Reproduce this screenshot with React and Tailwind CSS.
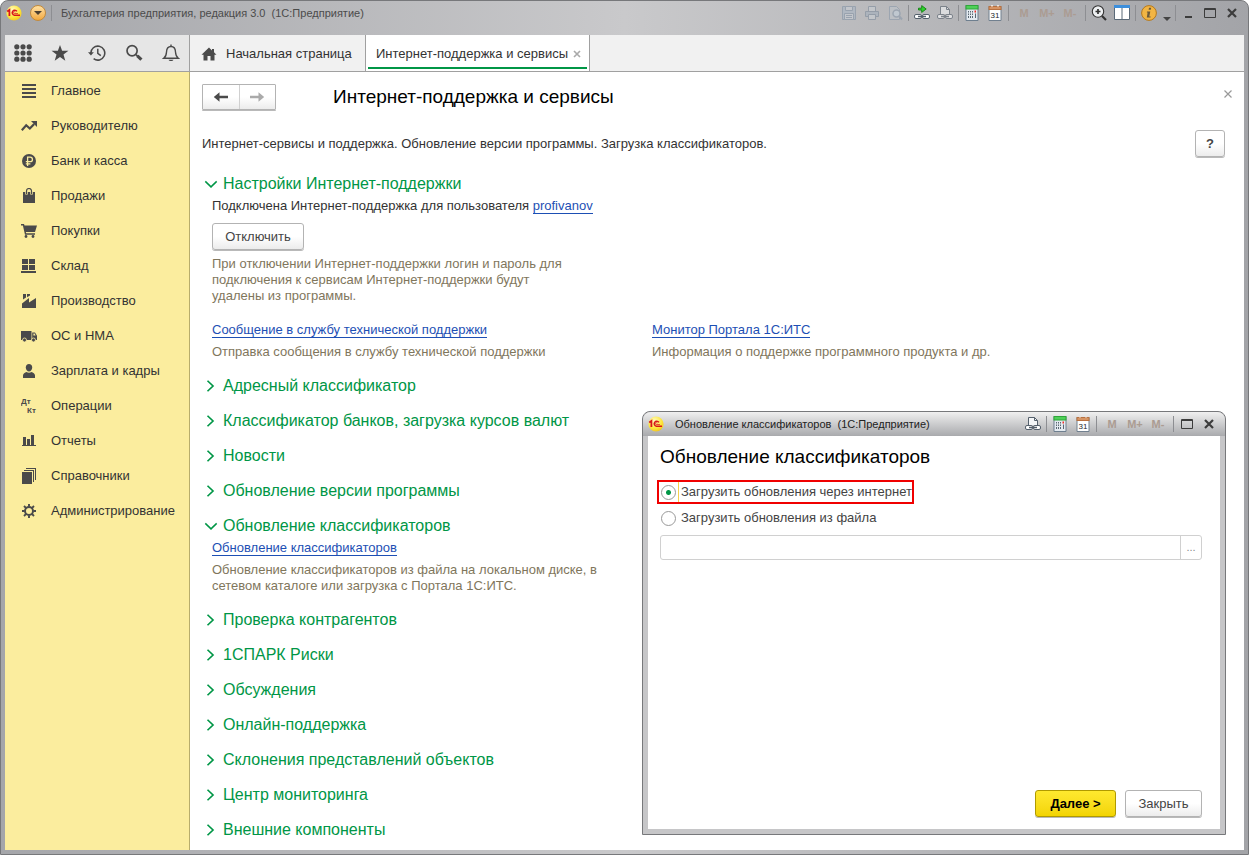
import { useState } from 'react';
import { clsx } from 'clsx';

/* ---------- icons ---------- */

const Svg = ({ size = 16, children, ...rest }) => (
  <svg width={size} height={size} viewBox="0 0 16 16" fill="currentColor" aria-hidden="true" className="shrink-0" {...rest}>
    {children}
  </svg>
);

const Logo = () => (
  <svg width="16" height="16" viewBox="0 0 16 16" className="shrink-0" aria-label="1С">
    <defs>
      <radialGradient id="logoFill" cx="0.4" cy="0.3" r="0.8">
        <stop offset="0" stopColor="#fffbc0" />
        <stop offset="0.6" stopColor="#fde63a" />
        <stop offset="1" stopColor="#eeb91c" />
      </radialGradient>
    </defs>
    <circle cx="8" cy="8" r="7.6" fill="url(#logoFill)" />
    <path d="M1.2 6.4 3.400 5v6" fill="none" stroke="#d8161b" strokeWidth="1.800" />
    <path d="M10.900 6.400A2.500 2.500 0 1 0 8.400 10.200H14" fill="none" stroke="#d8161b" strokeWidth="1.600" />
    <path d="M9.300 7.300a.9.9 0 1 0-.8 1.200H12" fill="none" stroke="#d8161b" strokeWidth="0.700" />
  </svg>
);

const SaveIcon = () => (
  <Svg fill="none" stroke="#8393a5">
    <path d="M1.5 1.5h13v13h-13z" fill="#a9b6c4" />
    <path d="M4.5 1.5h7v4h-7zM3.5 8.5h9v6h-9z" fill="#c9ced4" />
    <path d="M5 10.5h6M5 12.500h6" />
  </Svg>
);

const PrintIcon = () => (
  <Svg fill="none" stroke="#7d8b9b">
    <path d="M4.500 6V1.500h7V6" fill="#c9ced4" />
    <path d="M1.500 6.500h13v5h-13z" fill="#a3afbc" />
    <path d="M4.500 9.500h7v5h-7z" fill="#c9ced4" />
  </Svg>
);

const PreviewIcon = () => (
  <Svg fill="none" stroke="#8a99aa">
    <path d="M2.500 1.500h7l3 3v10h-10z" fill="#bfc5cc" />
    <circle cx="9.500" cy="8.500" r="3.500" fill="#c5d2de" strokeWidth="1.500" />
    <path d="m12 11 3 3.500" strokeWidth="2" />
  </Svg>
);

const LinkIcon = ({ arrow, page }) => (
  <Svg fill="none" stroke="#55606c">
    {page && <path d="M3.500 9V1.500h6l3 3V9" fill="#f4f6f8" />}
    {page && <path d="M9.500 1.500v3h3" />}
    <rect x="0.500" y="9.500" width="7" height="4" rx="1.500" fill="#fff" />
    <rect x="8.500" y="9.500" width="7" height="4" rx="1.500" fill="#fff" />
    <path d="M4 11.500h8" strokeWidth="1.500" />
    {arrow && <path d="M4.500 3.200h3.200V.6L12.200 4 7.700 7.400V5H4.500z" fill="#2fd32f" stroke="#128012" strokeWidth="0.900" />}
  </Svg>
);

const CalcIcon = () => (
  <Svg>
    <path d="M2 .5h12v15H2z" fill="#e4eaf0" stroke="#6e7f8f" />
    <path d="M1.500 0h13v4.500h-13z" fill="#2fa53a" />
    <path d="M2.500 1h11v2.500h-11z" fill="#4fd058" />
    <path d="M4 6h1v1.500H4zM6 6h1v1.500H6zM8 6h1v1.500H8zM4 8.500h1V10H4zM6 8.500h1V10H6zM8 8.500h1V10H8zM4 11h1v2H4zM6 11h1v2H6zM8 11h1v2H8zM11 8.500h1V13h-1z" fill="#5b6873" />
    <path d="M10.500 5.500H12v2h-1.500z" fill="#f0302a" />
  </Svg>
);

const CalendarIcon = () => (
  <Svg>
    <path d="M2 1.500h12v14H2z" fill="#fff" stroke="#71808f" />
    <path d="M1.500 1h13v4h-13z" fill="#b8703f" />
    <path d="M2.500 2h11v2h-11z" fill="#d69464" />
    <path d="M4 0h2v1.500H4zM10 0h2v1.500h-2z" fill="#ece4de" />
    <text x="8" y="12.500" textAnchor="middle" fontSize="8" fill="#22282e" fontFamily="Liberation Sans, sans-serif">31</text>
  </Svg>
);

const ZoomIcon = () => (
  <Svg fill="none" stroke="#333">
    <circle cx="7" cy="6.500" r="5.700" fill="#eef0f2" strokeWidth="1.100" />
    <path d="M4.500 6.500h5M7 4v5" strokeWidth="1.700" />
    <path d="m11 11 4 4" strokeWidth="2.200" />
  </Svg>
);

const ColumnsIcon = () => (
  <Svg>
    <path d="M.5 1.500h15v13H.5z" fill="#fff" stroke="#5b6a78" />
    <path d="M0 0h16v3H0z" fill="#3d8fdc" />
    <path d="M7.500 3h1v12h-1z" fill="#5b6a78" />
  </Svg>
);

const InfoIcon = () => (
  <Svg>
    <circle cx="8" cy="8" r="7.400" fill="#f2b544" stroke="#b4781c" />
    <path d="M8 2.700h2.200l-.4 2H7.600zM6 6.400h3.300l-1 5h1.400l-.2 1.200H5.800L6.600 7.600H5.800z" fill="#6b5a3c" />
  </Svg>
);

const MinimizeIcon = () => (
  <Svg><path d="M5 11h7v2H5z" /></Svg>
);

const MaximizeIcon = () => (
  <Svg fill="none" stroke="currentColor">
    <path d="M3 4h10" strokeWidth="2" />
    <path d="M2.500 3.500h11v9h-11z" />
  </Svg>
);

const CloseIcon = ({ size }) => (
  <Svg size={size} fill="none" stroke="currentColor">
    <path d="m4 4 8 8M12 4l-8 8" strokeWidth="2.200" />
  </Svg>
);

const ThinCloseIcon = () => (
  <Svg fill="none" stroke="currentColor"><path d="m4.500 4.500 7 7M11.500 4.500l-7 7" strokeWidth="1.200" /></Svg>
);

const AppsIcon = () => (
  <Svg size={18}>
    {[2.5, 8, 13.5].map((y) => [2.5, 8, 13.5].map((x) => <circle key={`${x}-${y}`} cx={x} cy={y} r="2.300" />))}
  </Svg>
);

const StarIcon = () => (
  <Svg size={18}><path d="m8 .8 1.900 5.200h5.600L11.100 9.300l1.600 5.500L8 11.500l-4.700 3.300 1.600-5.500L.5 6h5.600z" /></Svg>
);

const HistoryIcon = () => (
  <Svg size={18} fill="none" stroke="currentColor">
    <path d="M2.500 8.200A6.200 6.200 0 1 1 5 13.100" strokeWidth="1.400" />
    <path d="M0 7.300h5.200L2.600 10.300z" fill="currentColor" stroke="none" />
    <path d="M8.700 4.300v4l2.700 2" strokeWidth="1.300" />
  </Svg>
);

const SearchIcon = () => (
  <Svg size={18} fill="none" stroke="currentColor">
    <circle cx="6.300" cy="6" r="4.500" strokeWidth="1.500" />
    <path d="m9.800 9.500 1.500 1.500" strokeWidth="1.500" />
    <path d="m11 10.500 3.600 3.400" strokeWidth="2.800" />
  </Svg>
);

const BellIcon = () => (
  <Svg size={18} fill="none" stroke="currentColor">
    <path d="M1.500 12.700c2-1.500 2.400-3 2.500-5.500.1-3 1.500-5 4-5s3.900 2 4 5c.1 2.500.5 4 2.500 5.500z" strokeWidth="1.200" />
    <path d="M7.400.5h1.200v2H7.400zM5.800 14h4.400c-.4 1.600-4 1.600-4.400 0z" fill="currentColor" stroke="none" />
  </Svg>
);

const HomeIcon = () => (
  <Svg><path d="M8 1.500.5 8.700h2V14.500h4V10h3v4.500h4V8.700h2L13 6.300V3h-2v1.400z" /></Svg>
);

const ArrowIcon = ({ flip }) => (
  <Svg className={clsx('shrink-0', flip && 'rotate-180')}>
    <path d="M.8 8l5.700-4.800v3.600H15v2.400H6.500v3.600z" />
  </Svg>
);

const ChevronIcon = ({ open }) => (
  <Svg size={14} fill="none" stroke="currentColor">
    {open ? <path d="m1.500 5 6.500 6.300L14.500 5" strokeWidth="1.700" /> : <path d="m4 2 6.300 6L4 14" strokeWidth="1.900" />}
  </Svg>
);

const menuIcons = {
  main: <path d="M1 1h14v2H1zM1 5h14v2H1zM1 9h14v2H1zM1 13h14v2H1z" />,
  trend: (
    <>
      <path d="m.8 12.300 4.400-5 3.600 3.200 4.400-4.600" fill="none" stroke="currentColor" strokeWidth="2.200" />
      <path d="M10 3h6v6z" />
    </>
  ),
  ruble: (
    <>
      <circle cx="8" cy="8" r="7" />
      <path d="M6.600 13V4.200h2.600a2.200 2.200 0 0 1 0 4.500H4.800M4.800 10.800h4.600" fill="none" stroke="#fbed9e" strokeWidth="1.300" />
    </>
  ),
  bag: (
    <>
      <path d="M2 4h12v11H2z" />
      <path d="M5.500 6.500V3a2.500 2.500 0 0 1 5 0v3.500" fill="none" stroke="#fbed9e" strokeWidth="2.600" />
      <path d="M5.500 6V3a2.500 2.500 0 0 1 5 0v3" fill="none" stroke="currentColor" strokeWidth="1.200" />
    </>
  ),
  cart: (
    <>
      <path d="M0 1h3l.5 1.500H16L14 9H4.800l.4 1.300H14v1.400H4L1.900 2.400H0z" />
      <circle cx="5" cy="13.500" r="1.400" />
      <circle cx="12" cy="13.500" r="1.400" />
    </>
  ),
  stock: <path d="M1 1h6v5H1zM8 1h6v5H8zM1 7h6v5H1zM8 7h6v5H8zM0 13h15v2H0z" />,
  factory: <path d="M2 1h3v3.500L2 6.500zM6 1h3v1.500L6 4.200zM1 15v-4.500L8 5v4.500L15 5v10z" />,
  truck: (
    <>
      <path d="M0 3h10.500v9H0zM11.200 4.500H14l2 3.300V12h-4.800z" />
      <path d="M12.400 5.600h1.200l1 2h-2.200z" fill="#fbed9e" />
      <circle cx="3.500" cy="12" r="2" stroke="#fbed9e" strokeWidth="0.800" />
      <circle cx="12.500" cy="12" r="2" stroke="#fbed9e" strokeWidth="0.800" />
    </>
  ),
  person: (
    <>
      <path d="M8 1c2 0 3.200 1.300 3.200 3.400S9.800 8.500 8 8.500 4.800 6.500 4.800 4.400 6 1 8 1z" />
      <path d="M2 15v-2.500C2 10.500 4 9.500 5.500 9c1.500 1 3.500 1 5 0 1.500.5 3.500 1.500 3.500 3.500V15z" />
    </>
  ),
  debit: (
    <g fontFamily="Liberation Sans, sans-serif" fontSize="8" fontWeight="bold">
      <text x="0" y="6">Дт</text>
      <text x="6" y="15">Кт</text>
    </g>
  ),
  chart: <path d="M2 4h3v8H2zM6 6h3v6H6zM10 2h3v10h-3zM1 12h14v1H1z" />,
  books: <path d="M1 4h10v12H1zM3 2h10v12h-1V3H3zM5 0h10v12h-1V1H5z" />,
  gear: (
    <>
      <circle cx="8" cy="8" r="4" fill="none" stroke="currentColor" strokeWidth="2" />
      <path d="M8 1v2.500M8 12.500V15M1 8h2.500M12.500 8H15M3 3l1.900 1.900M11.100 11.100 13 13M13 3l-1.900 1.900M4.900 11.100 3 13" stroke="currentColor" strokeWidth="1.900" />
    </>
  ),
};

/* ---------- data ---------- */

const menu = [
  { icon: 'main', label: 'Главное' },
  { icon: 'trend', label: 'Руководителю' },
  { icon: 'ruble', label: 'Банк и касса' },
  { icon: 'bag', label: 'Продажи' },
  { icon: 'cart', label: 'Покупки' },
  { icon: 'stock', label: 'Склад' },
  { icon: 'factory', label: 'Производство' },
  { icon: 'truck', label: 'ОС и НМА' },
  { icon: 'person', label: 'Зарплата и кадры' },
  { icon: 'debit', label: 'Операции' },
  { icon: 'chart', label: 'Отчеты' },
  { icon: 'books', label: 'Справочники' },
  { icon: 'gear', label: 'Администрирование' },
];

const tools = [
  { label: 'Меню функций', Icon: AppsIcon },
  { label: 'Избранное', Icon: StarIcon },
  { label: 'История', Icon: HistoryIcon },
  { label: 'Поиск', Icon: SearchIcon },
  { label: 'Оповещения', Icon: BellIcon },
];

/* ---------- small parts ---------- */

const BarButton = ({ label, disabled, children }) => (
  <button type="button" aria-label={label} disabled={disabled} className={clsx('flex h-4 w-4 items-center justify-center', disabled && 'opacity-60')}>
    {children}
  </button>
);

const MemoryButton = ({ children }) => (
  <button type="button" className="flex h-4 w-4 items-center justify-center text-[11px] font-bold text-[#ab9c92]">{children}</button>
);

const MemoryButtons = () => (
  <div className="flex items-center gap-[7px] px-[2px]">
    <MemoryButton>M</MemoryButton>
    <MemoryButton>M+</MemoryButton>
    <MemoryButton>M-</MemoryButton>
  </div>
);

const Separator = ({ tight }) => <span className={clsx('h-4 w-px bg-[#8d8e92]', tight ? 'mx-1' : 'mx-[5px]')} />;

const Group = ({ children }) => <div className="flex items-center gap-[7px]">{children}</div>;

const Button = ({ primary, className, children, ...rest }) => (
  <button
    type="button"
    className={clsx(
      'h-[27px] rounded-[3px] border text-[13px] shadow-[0_1px_0_#b9b9b9]',
      primary
        ? 'border-[#b09a00] bg-linear-to-b from-[#ffe92e] to-[#f3d400] font-bold text-black'
        : 'border-[#b3b3b3] bg-linear-to-b from-white from-50% to-[#ececec] text-[#444]',
      className
    )}
    {...rest}
  >
    {children}
  </button>
);

const Link = ({ children }) => (
  <a href="#" className="border-b border-[#1d4fb4] leading-[14px] text-[#1d4fb4]">{children}</a>
);

const Hint = ({ children }) => <p className="mt-[6px] leading-4 text-[#7f765c]">{children}</p>;

const Section = ({ title, defaultOpen = false, children }) => {
  const [open, setOpen] = useState(defaultOpen);

  return (
    <section>
      <h2>
        <button
          type="button"
          aria-expanded={open}
          onClick={() => setOpen(!open)}
          className="flex h-5 items-center gap-[5px] text-[16px] leading-5 text-[#009646]"
        >
          <ChevronIcon open={open} />
          {title}
        </button>
      </h2>
      {open && children && <div className="mt-1 pb-px pl-2">{children}</div>}
    </section>
  );
};

/* ---------- page ---------- */

const TitleBar = () => (
  <header className="flex h-[34px] items-start justify-between pt-[3px] pr-2 pl-[5px] text-[#3c3c3c]">
    <div className="flex h-[18px] items-center">
      <Logo />
      <button type="button" aria-label="Главное меню" className="ml-2 flex h-4 w-4 items-center justify-center rounded-full border border-[#c48a3a] bg-linear-to-b from-[#ffe0a0] to-[#f2a93c]">
        <svg width="8" height="4" viewBox="0 0 8 4" aria-hidden="true"><path d="M0 0h8L4 4z" fill="#4d4030" /></svg>
      </button>
      <Separator />
      <span className="ml-1 text-[11px] whitespace-pre text-[#4b4b4b]">Бухгалтерия предприятия, редакция 3.0  (1С:Предприятие)</span>
    </div>
    <div className="flex h-[18px] items-center">
      <Group>
        <BarButton label="Сохранить" disabled><SaveIcon /></BarButton>
        <BarButton label="Печать" disabled><PrintIcon /></BarButton>
        <BarButton label="Просмотр" disabled><PreviewIcon /></BarButton>
      </Group>
      <Separator />
      <Group>
        <BarButton label="Перейти по ссылке"><LinkIcon arrow /></BarButton>
        <BarButton label="Получить ссылку" disabled><LinkIcon page /></BarButton>
      </Group>
      <Separator />
      <Group>
        <BarButton label="Калькулятор"><CalcIcon /></BarButton>
        <BarButton label="Календарь"><CalendarIcon /></BarButton>
      </Group>
      <Separator />
      <MemoryButtons />
      <Separator />
      <Group>
        <BarButton label="Масштаб"><ZoomIcon /></BarButton>
        <BarButton label="Панели"><ColumnsIcon /></BarButton>
      </Group>
      <Separator />
      <div className="flex items-center gap-[6px]">
        <BarButton label="Справка"><InfoIcon /></BarButton>
        <button type="button" aria-label="Ещё" className="flex h-4 w-2 items-end">
          <svg width="8" height="4" viewBox="0 0 8 4" aria-hidden="true"><path d="M0 0h8L4 4z" fill="#444" /></svg>
        </button>
      </div>
      <Separator tight />
      <div className="flex items-center gap-[6px]">
        <BarButton label="Свернуть"><MinimizeIcon /></BarButton>
        <BarButton label="Развернуть"><MaximizeIcon /></BarButton>
        <BarButton label="Закрыть окно"><CloseIcon /></BarButton>
      </div>
    </div>
  </header>
);

const Tabs = () => (
  <div className="flex h-[37px] border-b border-[#a0a0a0] bg-[#f1f1f1] text-[13px] text-[#333]">
    <div className="flex w-[185px] shrink-0 items-center border-r border-[#a0a0a0] bg-[#e6e6e6] text-[#4a4a4a]">
      {tools.map(({ label, Icon }) => (
        <button key={label} type="button" aria-label={label} className="flex flex-1 justify-center">
          <Icon />
        </button>
      ))}
    </div>
    <button type="button" className="flex w-44 items-center gap-[9px] border-r border-[#a0a0a0] pt-px pl-[11px]">
      <span className="text-[#4a4a4a]"><HomeIcon /></span>
      Начальная страница
    </button>
    <div className="flex w-56 border-r border-[#a0a0a0] bg-white px-[2px] pb-[2px]">
      <div className="flex flex-1 items-center justify-between border-b-2 border-[#009646] pt-[5px] pr-1 pl-2">
        <button type="button">Интернет-поддержка и сервисы</button>
        <button type="button" aria-label="Закрыть вкладку" className="text-[#aaa]"><CloseIcon size={12} /></button>
      </div>
    </div>
  </div>
);

const Sidebar = () => (
  <nav className="w-[185px] shrink-0 border-r border-[#b8ad6c] bg-[#fbed9e] pt-px">
    <ul>
      {menu.map(({ icon, label }) => (
        <li key={label}>
          <a href="#" className="flex h-[35px] items-center gap-[14px] pl-4 text-[13px] text-[#333]">
            <span className="text-[#4a4a4a]"><Svg>{menuIcons[icon]}</Svg></span>
            {label}
          </a>
        </li>
      ))}
    </ul>
  </nav>
);

const Content = () => (
  <main className="min-w-0 flex-1 bg-white px-3 pt-3 text-[13px] text-[#333]">
    <div className="flex items-center">
      <div className="flex h-[26px] w-[74px] rounded-[1px] border border-[#b3b3b3] bg-linear-to-b from-white from-50% to-[#ececec] shadow-[0_1px_0_#b9b9b9]">
        <button type="button" aria-label="Назад" className="flex flex-1 items-center justify-center border-r border-[#d0d0d0] text-[#4a4a4a]"><ArrowIcon /></button>
        <button type="button" aria-label="Вперед" className="flex flex-1 items-center justify-center text-[#aaa]"><ArrowIcon flip /></button>
      </div>
      <h1 className="ml-[57px] flex-1 text-[19px] leading-6 text-black">Интернет-поддержка и сервисы</h1>
      <button type="button" aria-label="Закрыть" className="-mr-1 self-start pt-[2px] text-[#999]"><ThinCloseIcon /></button>
    </div>

    <div className="mt-5 flex items-center justify-between pr-[7px]">
      <p>Интернет-сервисы и поддержка. Обновление версии программы. Загрузка классификаторов.</p>
      <Button className="w-[30px] font-bold">?</Button>
    </div>

    <div className="mt-[17px] flex flex-col gap-[15px] pb-[10px] pl-[2px]">
      <Section title="Настройки Интернет-поддержки" defaultOpen>
        <p className="leading-4">Подключена Интернет-поддержка для пользователя <Link>profivanov</Link></p>
        <Button className="mt-[9px] w-[92px]">Отключить</Button>
        <Hint>
          При отключении Интернет-поддержки логин и пароль для<br />
          подключения к сервисам Интернет-поддержки будут<br />
          удалены из программы.
        </Hint>
        <div className="mt-[18px] grid grid-cols-[440px_1fr]">
          <div>
            <p className="leading-4"><Link>Сообщение в службу технической поддержки</Link></p>
            <Hint>Отправка сообщения в службу технической поддержки</Hint>
          </div>
          <div>
            <p className="leading-4"><Link>Монитор Портала 1С:ИТС</Link></p>
            <Hint>Информация о поддержке программного продукта и др.</Hint>
          </div>
        </div>
      </Section>
      <Section title="Адресный классификатор" />
      <Section title="Классификатор банков, загрузка курсов валют" />
      <Section title="Новости" />
      <Section title="Обновление версии программы" />
      <Section title="Обновление классификаторов" defaultOpen>
        <p className="leading-4"><Link>Обновление классификаторов</Link></p>
        <Hint>
          Обновление классификаторов из файла на локальном диске, в<br />
          сетевом каталоге или загрузка с Портала 1С:ИТС.
        </Hint>
      </Section>
      <Section title="Проверка контрагентов" />
      <Section title="1СПАРК Риски" />
      <Section title="Обсуждения" />
      <Section title="Онлайн-поддержка" />
      <Section title="Склонения представлений объектов" />
      <Section title="Центр мониторинга" />
      <Section title="Внешние компоненты" />
    </div>
  </main>
);

const Radio = ({ value, current, onChange, marked, children }) => (
  <label className={clsx('-ml-[3px] flex h-6 items-center self-start border-2 pl-[2px]', marked ? 'border-[#f00000]' : 'border-transparent')}>
    <input
      type="radio"
      name="source"
      value={value}
      checked={current === value}
      onChange={() => onChange(value)}
      className="h-[15px] w-[15px] appearance-none rounded-full border border-[#999] bg-white checked:bg-[radial-gradient(circle,#009646_0_2px,white_3px)]"
    />
    <span className={clsx('ml-[2px] flex h-5 items-center border-l pl-[2px]', marked ? 'border-[#f5d04c]' : 'border-transparent')}>{children}</span>
  </label>
);

const UpdateDialog = () => {
  const [source, setSource] = useState('internet');

  return (
    <div
      role="dialog"
      aria-labelledby="dialog-title"
      className="absolute right-[22px] bottom-[19px] flex h-[424px] w-[584px] flex-col rounded-t-lg border border-[#77787b] bg-[#c6c6c8] px-[5px] pb-[5px] text-[13px] text-[#444]"
    >
      <div className="-mx-[5px] flex h-6 items-center justify-between rounded-t-lg bg-linear-to-b from-[#f0f0f0] to-[#a9aaad] pr-2 pl-[5px] text-[#3c3c3c]">
        <div className="flex items-center gap-[11px]">
          <Logo />
          <span className="text-[11px] whitespace-pre text-[#222]">Обновление классификаторов  (1С:Предприятие)</span>
        </div>
        <div className="flex items-center">
          <BarButton label="Получить ссылку"><LinkIcon page /></BarButton>
          <Separator />
          <Group>
            <BarButton label="Калькулятор"><CalcIcon /></BarButton>
            <BarButton label="Календарь"><CalendarIcon /></BarButton>
          </Group>
          <Separator />
          <MemoryButtons />
          <Separator />
          <div className="flex items-center gap-[6px]">
            <BarButton label="Развернуть"><MaximizeIcon /></BarButton>
            <BarButton label="Закрыть окно"><CloseIcon /></BarButton>
          </div>
        </div>
      </div>

      <div className="flex flex-1 flex-col bg-white pt-[9px] pr-[18px] pb-3 pl-3">
        <h2 id="dialog-title" className="mb-[11px] text-[19px] leading-6 text-black">Обновление классификаторов</h2>
        <div className="flex flex-col gap-[2px]">
          <Radio value="internet" current={source} onChange={setSource} marked>Загрузить обновления через интернет</Radio>
          <Radio value="file" current={source} onChange={setSource}>Загрузить обновления из файла</Radio>
        </div>
        <div className="mt-[5px] flex h-[25px] rounded-[3px] border border-[#d0d0d0]">
          <input type="text" aria-label="Файл обновлений" className="min-w-0 flex-1 px-1 outline-none" />
          <button type="button" aria-label="Выбрать файл" className="w-[21px] border-l border-[#d0d0d0] text-[11px] text-[#888]">...</button>
        </div>
        <div className="mt-auto flex justify-end gap-[9px]">
          <Button primary className="w-[81px]">Далее &gt;</Button>
          <Button className="w-[77px]">Закрыть</Button>
        </div>
      </div>
    </div>
  );
};

const App = () => (
  <div className="relative flex min-h-screen flex-col rounded-t-lg border border-[#77787b] bg-linear-to-r from-[#a5a6aa] via-[#c9c9cb] to-[#a3a4a8] font-['Liberation_Sans',Arial,sans-serif]">
    <TitleBar />
    <div className="mx-1 mb-1 flex flex-1 flex-col">
      <Tabs />
      <div className="flex flex-1">
        <Sidebar />
        <Content />
      </div>
    </div>
    <UpdateDialog />
  </div>
);

export default App;
